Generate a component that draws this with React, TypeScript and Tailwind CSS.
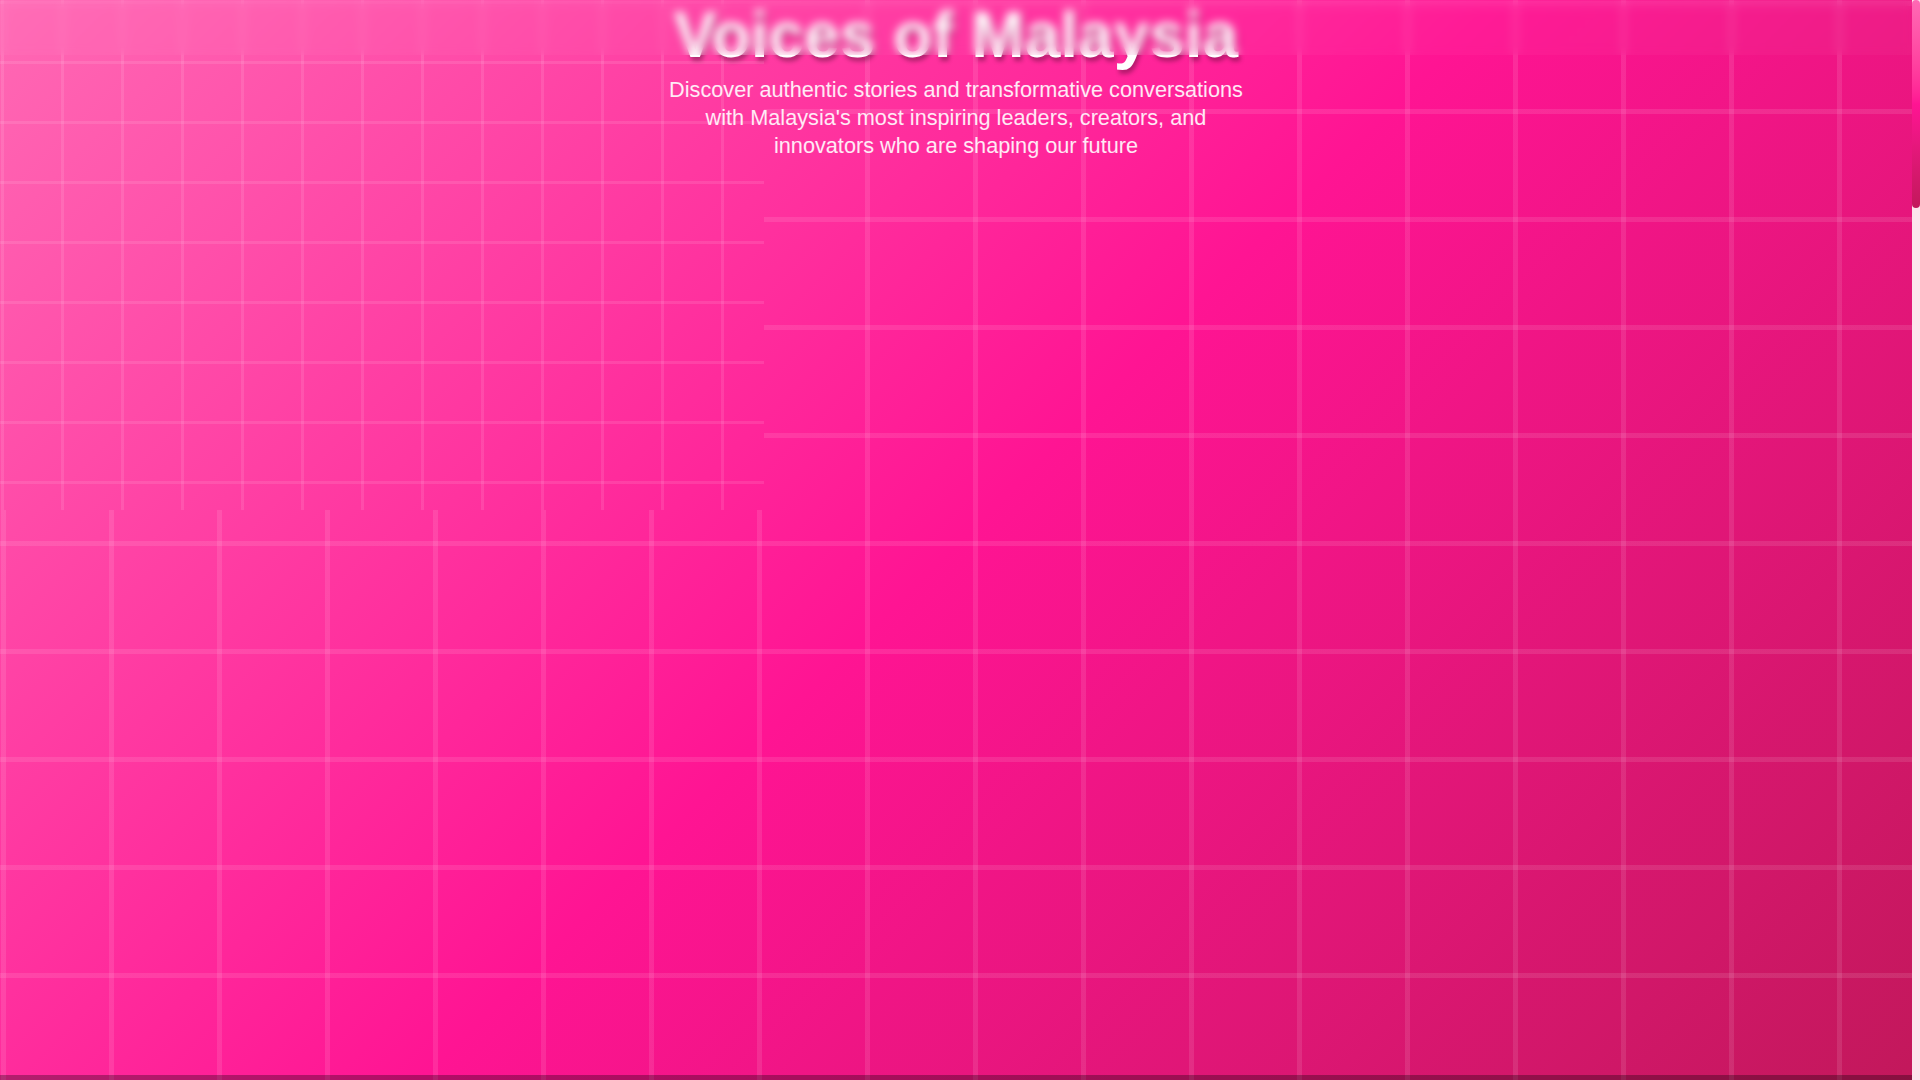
import React from 'react';

const App: React.FC = () => {
  return (
    <div className="flex h-screen w-full overflow-hidden bg-[repeating-linear-gradient(90deg,transparent_0_1px,rgba(255,255,255,0.1)_1px_6px,transparent_6px_108px),repeating-linear-gradient(180deg,transparent_0_1px,rgba(255,255,255,0.1)_1px_6px,transparent_6px_108px),linear-gradient(135deg,#ff69b4,#ff1493,#c2185b)] font-['Liberation_Sans','Arial',sans-serif]">
      <div className="relative flex flex-1 flex-col">
        {/* finer grid patch behind the hero */}
        <div className="pointer-events-none absolute left-0 top-0 h-[510px] w-[764px] bg-fixed bg-[repeating-linear-gradient(90deg,transparent_0_1px,rgba(255,255,255,0.1)_1px_4px,transparent_4px_60px),repeating-linear-gradient(180deg,transparent_0_1px,rgba(255,255,255,0.1)_1px_4px,transparent_4px_60px),linear-gradient(135deg,#ff69b4,#ff1493,#c2185b)]" />

        <main className="relative flex flex-1 flex-col items-center pt-[3px] text-center">
          <h1 className="text-[64px] font-bold leading-none text-white [text-shadow:2px_4px_4px_rgba(0,0,0,0.3)]">
            Voices of Malaysia
          </h1>
          <p className="mt-[9px] max-w-[600px] text-[21.7px] leading-[28px] text-white/90">
            Discover authentic stories and transformative conversations with Malaysia's most inspiring leaders, creators, and innovators who are shaping our future
          </p>
        </main>

        {/* frosted top bar */}
        <div className="absolute inset-x-0 top-0 h-[55px] bg-white/[0.03] backdrop-blur-[5px]" />

        <div className="h-[5px] bg-black/30" />
      </div>

      {/* scrollbar */}
      <div className="w-2 bg-[#fce4ec]">
        <div className="h-[208px] rounded-full bg-gradient-to-b from-[#ff69b4] via-[#ff1493] to-[#c2185b]" />
      </div>
    </div>
  );
};

export default App;
